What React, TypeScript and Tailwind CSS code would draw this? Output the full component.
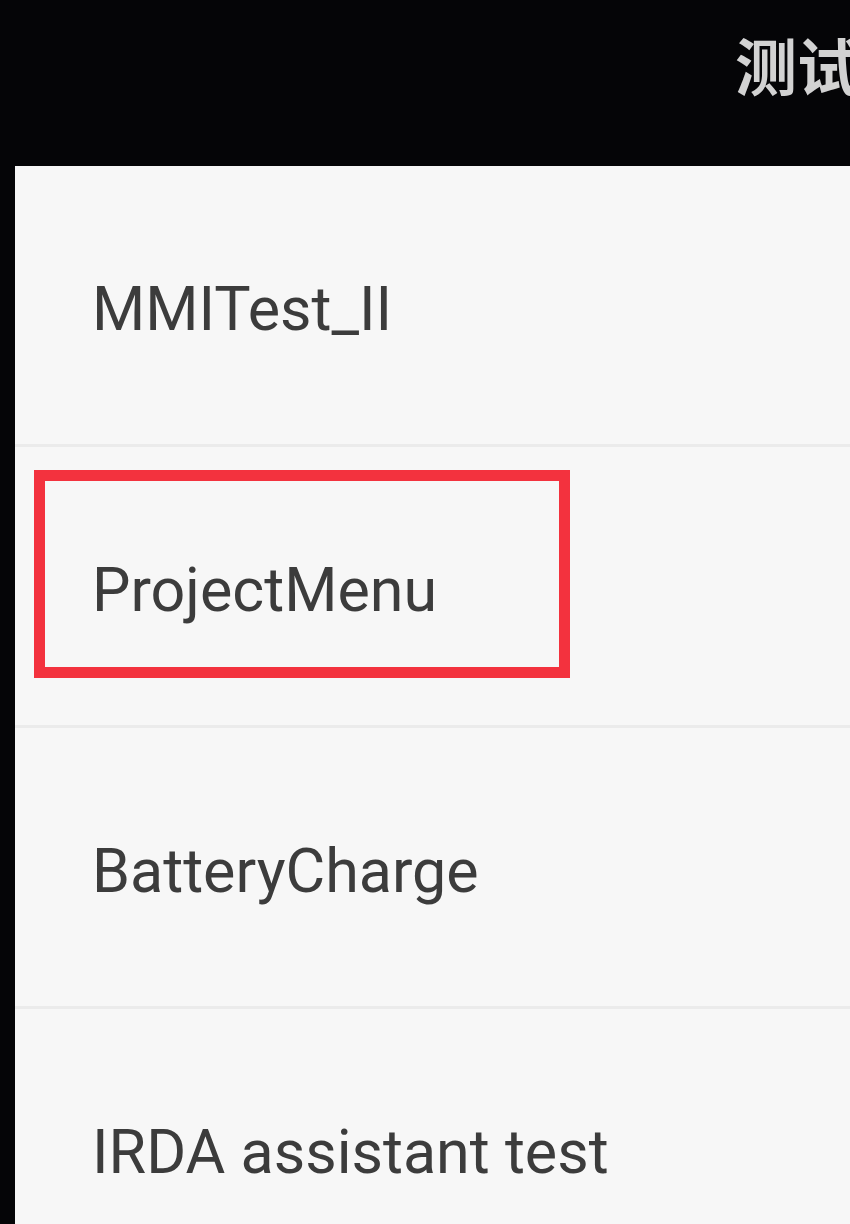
const items = ["MMITest_II", "ProjectMenu", "BatteryCharge", "IRDA assistant test"];

export default function App() {
  return (
    <div className="w-[850px] h-[1224px] bg-[#050507] overflow-hidden flex flex-col">
      {/* Action bar */}
      <div className="h-[166px] shrink-0 pl-[735px] pt-[33px] whitespace-nowrap overflow-hidden">
        <span
          className="text-[62px] leading-none font-bold text-[#d2d2d2]"
          style={{ fontFamily: '"Noto Sans CJK SC", "Noto Sans", sans-serif' }}
        >
          测试
        </span>
      </div>

      {/* List */}
      <div
        className="flex-1 ml-[15px] bg-[#f7f7f7] flex flex-col"
        style={{ fontFamily: 'Roboto, "Noto Sans", sans-serif' }}
      >
        {items.map((label, i) => (
          <div key={label} className="flex flex-col shrink-0">
            {i > 0 && <div className="h-[3px] bg-[#ebebeb]" />}
            <div className="relative h-[278px] flex items-center pl-[77px] pt-[8px]">
              <span className="text-[61px] leading-none text-[#3c3c3c]">{label}</span>
              {label === "ProjectMenu" && (
                <div className="absolute left-[19px] top-[23px] w-[536px] h-[208px] border-[11px] border-[#f3323e]" />
              )}
            </div>
          </div>
        ))}
      </div>
    </div>
  );
}
